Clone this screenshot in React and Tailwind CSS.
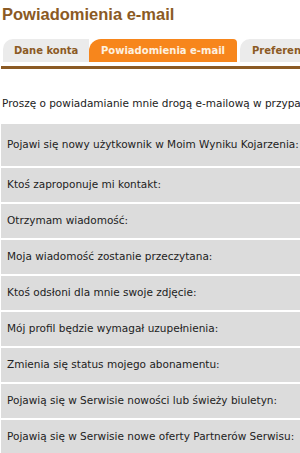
import React from "react";

const rows = [
	"Pojawi się nowy użytkownik w Moim Wyniku Kojarzenia:",
	"Ktoś zaproponuje mi kontakt:",
	"Otrzymam wiadomość:",
	"Moja wiadomość zostanie przeczytana:",
	"Ktoś odsłoni dla mnie swoje zdjęcie:",
	"Mój profil będzie wymagał uzupełnienia:",
	"Zmienia się status mojego abonamentu:",
	"Pojawią się w Serwisie nowości lub świeży biuletyn:",
	"Pojawią się w Serwisie nowe oferty Partnerów Serwisu:"
];

const App = () => {
	return (
		<div className="w-[300px] h-[453px] overflow-hidden bg-white font-['DejaVu_Sans',Verdana,sans-serif]">
			<h1 className="pl-[2px] pt-[4px] text-[16.5px] leading-[20px] font-bold text-[#8b5a24] font-['Liberation_Sans',Arial,sans-serif]">
				Powiadomienia e-mail
			</h1>

			{/* tabs */}
			<div className="mt-[15px] flex items-end pl-[3px] whitespace-nowrap overflow-hidden">
				<div className="h-[23px] w-[86px] shrink-0 rounded-tl-[10px] bg-[#ebebeb] flex items-center pl-[11px] text-[10px] font-bold text-[#8b5a24]">
					Dane konta
				</div>
				<div className="h-[23px] w-[148px] shrink-0 rounded-tl-[12px] rounded-tr-[4px] bg-[#f7861c] flex items-center pl-[12px] text-[10px] font-bold text-[#fdf1e0]">
					Powiadomienia e-mail
				</div>
				<div className="ml-[3px] h-[23px] w-[80px] shrink-0 rounded-tl-[10px] bg-[#ebebeb] flex items-center pl-[12px] text-[10px] font-bold text-[#8b5a24]">
					Preferencje
				</div>
			</div>
			<div className="ml-[1px] mt-[4px] h-[3px] bg-[#8b5a24]" />

			<p className="mt-[28px] pl-[2px] text-[10.5px] leading-[12px] text-[#222] whitespace-nowrap">
				Proszę o powiadamianie mnie drogą e-mailową w przypadku, gdy:
			</p>

			<div className="mt-[15px] ml-[1px] flex flex-col gap-[2px]">
				{rows.map((row, i) => (
					<div
						key={row}
						className={`${i === 0 ? "h-[42px]" : "h-[34px]"} bg-[#dcdcdc] flex items-center pl-[6px] text-[10.5px] text-[#222] whitespace-nowrap`}
					>
						{row}
					</div>
				))}
			</div>
		</div>
	);
};

export default App;
